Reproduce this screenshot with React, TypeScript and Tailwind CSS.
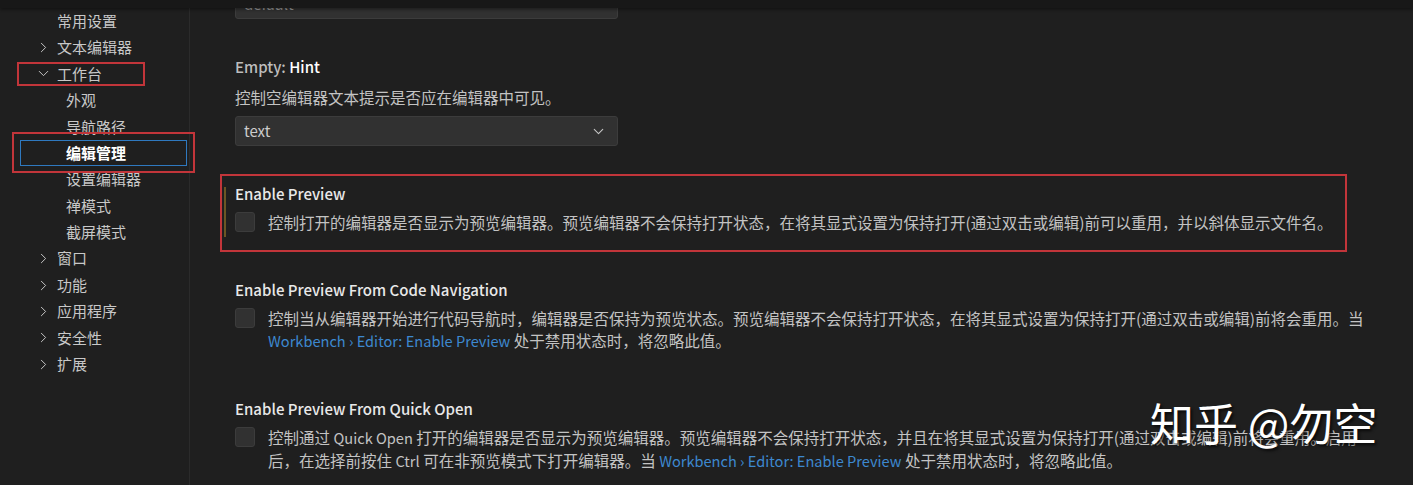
import { ChevronDown, ChevronRight } from 'lucide-react'

type NavItem = {
  label: string
  level: 1 | 2
  chevron?: 'right' | 'down'
  active?: boolean
}

const NAV: NavItem[] = [
  { label: '常用设置', level: 1 },
  { label: '文本编辑器', level: 1, chevron: 'right' },
  { label: '工作台', level: 1, chevron: 'down' },
  { label: '外观', level: 2 },
  { label: '导航路径', level: 2 },
  { label: '编辑管理', level: 2, active: true },
  { label: '设置编辑器', level: 2 },
  { label: '禅模式', level: 2 },
  { label: '截屏模式', level: 2 },
  { label: '窗口', level: 1, chevron: 'right' },
  { label: '功能', level: 1, chevron: 'right' },
  { label: '应用程序', level: 1, chevron: 'right' },
  { label: '安全性', level: 1, chevron: 'right' },
  { label: '扩展', level: 1, chevron: 'right' },
]

const FONT = "font-['Noto_Sans_CJK_SC','Noto_Sans',sans-serif]"

function Latin({ children, className = '' }: { children: React.ReactNode; className?: string }) {
  return <span className={`text-[14.6px] ${className}`}>{children}</span>
}

function WorkbenchLink() {
  return <Latin className="text-[#3d88cf]">Workbench › Editor: Enable Preview</Latin>
}

function Sidebar() {
  return (
    <div className="relative w-[190px] shrink-0 border-r border-[#2b2b2b] pt-[8px]">
      {NAV.map((item) => (
        <div
          key={item.label}
          className={`ml-[20px] mr-[2px] flex h-[26.4px] items-center text-[15px] ${
            item.level === 1 ? 'pl-[14px]' : 'pl-[46px]'
          } ${
            item.active
              ? 'font-bold text-white outline outline-1 -outline-offset-1 outline-[#2f79bf]'
              : 'text-[#c8c8c8]'
          }`}
        >
          {item.level === 1 && (
            <span className="mr-[5px] flex w-[18px] items-center justify-center text-[#c5c5c5]">
              {item.chevron === 'right' && <ChevronRight size={17} strokeWidth={1.4} />}
              {item.chevron === 'down' && <ChevronDown size={17} strokeWidth={1.4} />}
            </span>
          )}
          <span>{item.label}</span>
        </div>
      ))}

      {/* annotation boxes */}
      <div className="pointer-events-none absolute left-[17px] top-[62px] h-[24px] w-[128px] border-2 border-[#c2353a]" />
      <div className="pointer-events-none absolute left-[12px] top-[132px] z-10 h-[41px] w-[183px] border-2 border-[#c2353a]" />
    </div>
  )
}

function Checkbox() {
  return (
    <div className="mt-[1px] h-[20px] w-[20px] shrink-0 rounded-[3px] border border-[#3c3c3c] bg-[#313131]" />
  )
}

function Title({ children }: { children: React.ReactNode }) {
  return <div className="h-[22px] text-[15px] font-medium leading-[22px] text-[#e8e8e8]">{children}</div>
}

function CheckSetting({
  title,
  lines,
  highlighted,
}: {
  title: string
  lines: React.ReactNode[]
  highlighted?: boolean
}) {
  return (
    <div className="relative pl-[14px] pt-[12px] pb-[12px]">
      {highlighted && (
        <>
          <div className="absolute left-[3px] top-[16px] h-[50px] w-[2px] bg-[#6a5624]" />
          <div className="pointer-events-none absolute -left-[1px] top-[3px] h-[78px] w-[1127px] border-2 border-[#c2353a]" />
        </>
      )}
      <Title>{title}</Title>
      <div className="mt-[6px] flex gap-[13px]">
        <Checkbox />
        <div className="whitespace-nowrap text-[15.5px] leading-[22px] text-[#c3c3c3]">
          {lines.map((l, i) => (
            <div key={i}>{l}</div>
          ))}
        </div>
      </div>
    </div>
  )
}

export default function App() {
  return (
    <div className={`relative flex h-[485px] w-[1413px] overflow-hidden bg-[#1f1f1f] ${FONT}`}>
      <Sidebar />

      <div className="flex-1 pl-[31px]">
        <div className="flex flex-col gap-[22px]">
          {/* scrolled-off setting above */}
          <div className="-mt-[11px] pl-[14px] pb-[3px]">
            <div className="flex h-[30px] w-[383px] items-center rounded-[3px] border border-[#3c3c3c] bg-[#313131] pl-[8px] text-[15px] text-[#9a9a9a]">
              default
            </div>
          </div>

          <div className="pl-[14px] pt-[12px] pb-[3px]">
            <div className="h-[22px] text-[15px] font-medium leading-[22px] text-[#bdbdbd]">
              Empty: <span className="text-white">Hint</span>
            </div>
            <div className="mt-[8px] text-[15.5px] leading-[22px] text-[#c3c3c3]">
              控制空编辑器文本提示是否应在编辑器中可见。
            </div>
            <div className="mt-[8px] flex h-[30px] w-[383px] items-center justify-between rounded-[3px] border border-[#3c3c3c] bg-[#313131] pl-[8px] pr-[10px] text-[15px] text-[#cccccc]">
              <span>text</span>
              <ChevronDown size={17} strokeWidth={1.5} className="text-[#c5c5c5]" />
            </div>
          </div>

          <CheckSetting
            highlighted
            title="Enable Preview"
            lines={[
              '控制打开的编辑器是否显示为预览编辑器。预览编辑器不会保持打开状态，在将其显式设置为保持打开(通过双击或编辑)前可以重用，并以斜体显示文件名。',
            ]}
          />

          <CheckSetting
            title="Enable Preview From Code Navigation"
            lines={[
              '控制当从编辑器开始进行代码导航时，编辑器是否保持为预览状态。预览编辑器不会保持打开状态，在将其显式设置为保持打开(通过双击或编辑)前将会重用。当',
              <>
                <WorkbenchLink /> 处于禁用状态时，将忽略此值。
              </>,
            ]}
          />

          <CheckSetting
            title="Enable Preview From Quick Open"
            lines={[
              <>
                控制通过 <Latin>Quick Open</Latin> 打开的编辑器是否显示为预览编辑器。预览编辑器不会保持打开状态，并且在将其显式设置为保持打开(通过双击或编辑)前将会重用。启用
              </>,
              <>
                后，在选择前按住 <Latin>Ctrl</Latin> 可在非预览模式下打开编辑器。当 <WorkbenchLink /> 处于禁用状态时，将忽略此值。
              </>,
            ]}
          />
        </div>
      </div>

      {/* sticky header shadow */}
      <div className="absolute left-0 right-0 top-0 h-[8px] bg-[#181818] shadow-[0_2px_3px_rgba(0,0,0,0.35)]" />

      {/* watermark */}
      <div className="pointer-events-none absolute left-[1150px] top-[400px] text-[44px] leading-none text-white [text-shadow:2px_2px_3px_rgba(0,0,0,0.7)]">
        知乎 @勿空
      </div>
    </div>
  )
}
